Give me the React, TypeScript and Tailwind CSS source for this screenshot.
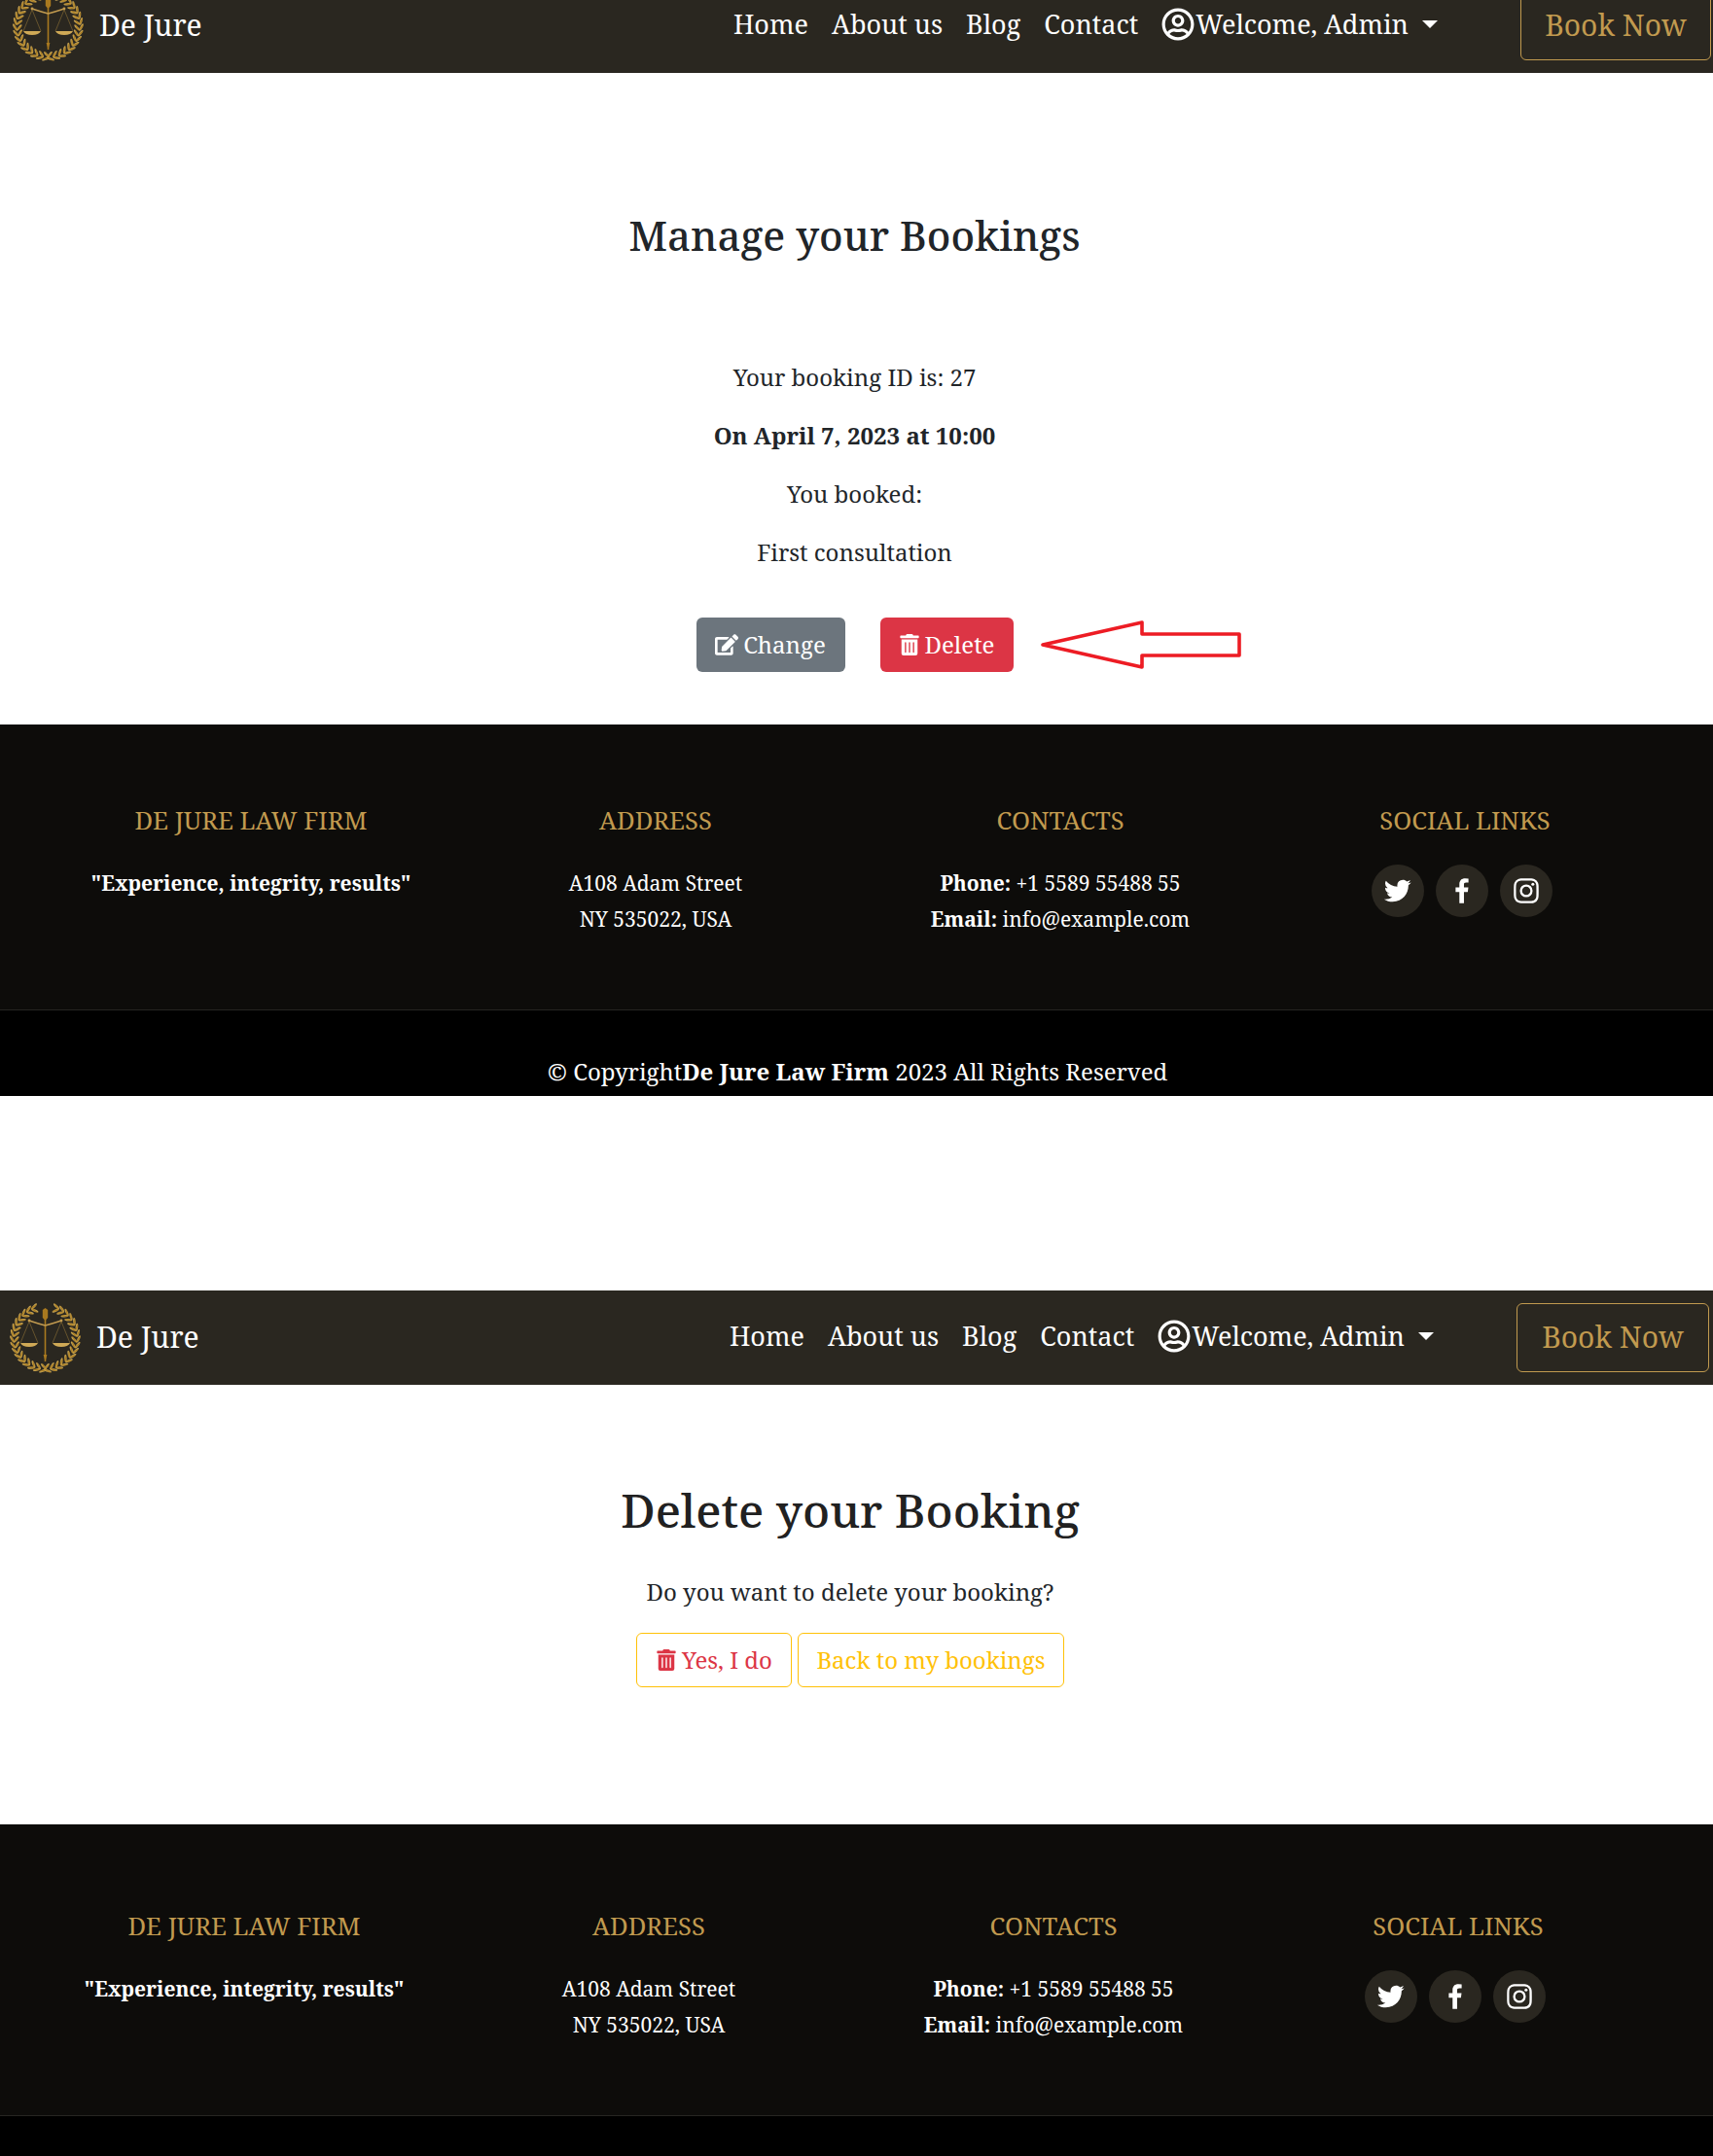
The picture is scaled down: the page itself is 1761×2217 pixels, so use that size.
import React from "react";
import { BiLogoTwitter, BiLogoFacebook, BiLogoInstagram } from "react-icons/bi";
import { FaRegUserCircle, FaEdit, FaTrashAlt } from "react-icons/fa";

const serif = "font-['Noto_Serif','DejaVu_Serif_Condensed','DejaVu_Serif',serif]";

function Logo() {
  const leaves: React.ReactElement[] = [];
  for (let side = -1; side <= 1; side += 2) {
    for (let i = 0; i < 16; i++) {
      const a = (10 + i * 10.4) * (Math.PI / 180);
      const cx = 37.5 + side * 32 * Math.sin(a + 0.18);
      const cy = 37.5 - 32 * Math.cos(a + 0.18);
      const deg = (side * (a * 180)) / Math.PI;
      for (const off of [-2.2, 2.2]) {
        leaves.push(
          <ellipse
            key={`${side}-${i}-${off}`}
            cx={0}
            cy={0}
            rx={1.25}
            ry={4}
            fill="url(#gold)"
            transform={`translate(${cx} ${cy}) rotate(${deg + 90 * side}) translate(${off} 0) rotate(${(-off * 35) / 2.2})`}
          />
        );
      }
    }
  }
  return (
    <svg width="75" height="75" viewBox="0 0 75 75" className="shrink-0">
      <defs>
        <linearGradient id="gold" x1="0" y1="0" x2="1" y2="1">
          <stop offset="0" stopColor="#d8b45e" />
          <stop offset="0.5" stopColor="#a87c22" />
          <stop offset="1" stopColor="#e2c77e" />
        </linearGradient>
      </defs>
      {leaves}
      <path d="M37.5 9 V62" stroke="#a9791f" strokeWidth="1.6" />
      <path d="M34.8 9 L37.5 7 L40.2 9 V17 L37.5 20 L34.8 17Z" fill="#a9791f" />
      <path d="M35.6 55 L37.5 62 L39.4 55Z" fill="#a9791f" />
      <path d="M21 20 Q30 23 37.5 25 Q45 23 54 20" stroke="#c19a4f" strokeWidth="1.4" fill="none" />
      <circle cx="21" cy="20" r="1.4" fill="#c19a4f" />
      <circle cx="54" cy="20" r="1.4" fill="#c19a4f" />
      <path d="M21 21 L12 43 M21 21 L30 43 M54 21 L45 43 M54 21 L63 43" stroke="#8f7235" strokeWidth="0.6" />
      <path d="M12 43 H30 Q28 47 21 47 Q14 47 12 43Z" fill="#cfa956" />
      <path d="M45 43 H63 Q61 47 54 47 Q47 47 45 43Z" fill="#cfa956" />
    </svg>
  );
}

function Navbar({ pad, wrap, btn }: { pad: string; wrap: string; btn: string }) {
  return (
    <div className={wrap}>
      <nav className={`flex h-[97px] items-center justify-between bg-[#2a2720] text-white ${pad}`}>
        <div className="flex items-center gap-[15px]">
          <Logo />
          <span className="pb-[2px] text-[30px]">De Jure</span>
        </div>
        <div className="flex items-center">
          <div className="flex items-center gap-[24px] pb-[3px] text-[27px]">
            <span>Home</span>
            <span>About us</span>
            <span>Blog</span>
            <span>Contact</span>
            <span className="flex items-center">
              <FaRegUserCircle className="mr-[1px] text-[34px]" />
              Welcome, Admin
              <span className="ml-[14px] h-0 w-0 border-x-[8px] border-t-[8px] border-x-transparent border-t-white" />
            </span>
          </div>
          <div className={`ml-[85px] flex h-[71px] items-center justify-center rounded-[6px] border border-[#c19a4f] pb-[3px] text-[30px] text-[#c19a4f] ${btn}`}>
            Book Now
          </div>
        </div>
      </nav>
    </div>
  );
}

function Footer({ left, pt, spacer, copy }: { left: string; pt: string; spacer: string; copy: boolean }) {
  return (
    <footer className="text-white">
      <div className={`bg-[#0d0c0a] border-b border-[#262522] ${pt} ${left} h-auto`}>
        <div className="grid w-[1664px] grid-cols-4 text-center text-[21px] leading-[36.7px]">
          <div>
            <h4 className="mb-[29px] text-[25.6px] leading-[34px] uppercase text-[#c19a4f]">De Jure Law Firm</h4>
            <p className="font-bold">"Experience, integrity, results"</p>
          </div>
          <div>
            <h4 className="mb-[29px] text-[25.6px] leading-[34px] uppercase text-[#c19a4f]">Address</h4>
            <p>A108 Adam Street</p>
            <p>NY 535022, USA</p>
          </div>
          <div>
            <h4 className="mb-[29px] text-[25.6px] leading-[34px] uppercase text-[#c19a4f]">Contacts</h4>
            <p><b>Phone:</b> +1 5589 55488 55</p>
            <p><b>Email:</b> info@example.com</p>
          </div>
          <div>
            <h4 className="mb-[28px] text-[25.6px] leading-[34px] uppercase text-[#c19a4f]">Social Links</h4>
            <div className="flex justify-center gap-[12px] pr-[6px]">
              {[BiLogoTwitter, BiLogoFacebook, BiLogoInstagram].map((Icon, i) => (
                <span key={i} className="flex h-[54px] w-[54px] items-center justify-center rounded-full bg-[#2a2720] text-[34px]">
                  <Icon />
                </span>
              ))}
            </div>
          </div>
        </div>
        <div className={spacer} />
      </div>
      <div className={copy ? "flex h-[88px] items-end justify-center bg-black pb-[8px] text-[24px] leading-[34px]" : "h-[44px] bg-black"}>
        {copy && (
          <p className="pl-[2px]">
            © Copyright<b>De Jure Law Firm</b> 2023 All Rights Reserved
          </p>
        )}
      </div>
    </footer>
  );
}

function Arrow() {
  return (
    <svg className="absolute left-[1068px] top-[636px]" width="210" height="54" viewBox="0 0 210 54">
      <path
        d="M4 27 L106 4 V16 H206 V38 H106 V50 Z"
        fill="none"
        stroke="#ed1c24"
        strokeWidth="3.6"
        strokeLinejoin="round"
      />
    </svg>
  );
}

export default function App() {
  return (
    <div className={`relative h-[2217px] w-[1761px] overflow-hidden bg-white ${serif} text-[#212529]`}>
      <Navbar wrap="h-[75px] overflow-hidden [&>nav]:-mt-[22px]" pad="pl-[12px] pr-[2px]" btn="w-[196px]" />
      <main className="h-[670px] pt-[143px] pr-[4px] text-center text-[24px] leading-[34px]">
        <h1 className="text-[42px] font-medium leading-[48px]">Manage your Bookings</h1>
        <div className="mt-[105px] flex flex-col gap-[26px]">
          <p>Your booking ID is: 27</p>
          <p className="font-bold">On April 7, 2023 at 10:00</p>
          <p>You booked:</p>
          <p>First consultation</p>
        </div>
        <div className="mt-[50px] flex justify-center gap-[36px]">
          <span className="flex h-[56px] w-[153px] items-center justify-center gap-[5px] rounded-[6px] bg-[#6c757d] pb-[1px] text-white">
            <FaEdit className="text-[24px]" /> Change
          </span>
          <span className="flex h-[56px] w-[137px] items-center justify-center gap-[5px] rounded-[6px] bg-[#dc3545] pb-[1px] text-white">
            <FaTrashAlt className="text-[22px]" /> Delete
          </span>
        </div>
      </main>
      <Arrow />
      <Footer left="pl-[50px]" pt="pt-[82px]" spacer="h-[75px]" copy />
      <div className="h-[200px]" />
      <Navbar wrap="" pad="pl-[9px] pr-[4px]" btn="w-[198px]" />
      <main className="h-[452px] pt-[102px] pr-[13px] text-center text-[24px] leading-[34px]">
        <h1 className="text-[48px] font-medium leading-[54px] text-[#212121]">Delete your Booking</h1>
        <p className="mt-[40px]">Do you want to delete your booking?</p>
        <div className="mt-[25px] flex justify-center gap-[6px]">
          <span className="flex h-[56px] w-[160px] items-center justify-center gap-[5px] rounded-[6px] border border-[#ffc107] pb-[1px] text-[#dc3545]">
            <FaTrashAlt className="text-[22px]" /> Yes, I do
          </span>
          <span className="flex h-[56px] w-[274px] items-center justify-center rounded-[6px] border border-[#ffc107] pb-[1px] text-[#ffc107]">
            Back to my bookings
          </span>
        </div>
      </main>
      <Footer left="pl-[43px]" pt="pt-[88px]" spacer="h-[74px]" copy={false} />
    </div>
  );
}
